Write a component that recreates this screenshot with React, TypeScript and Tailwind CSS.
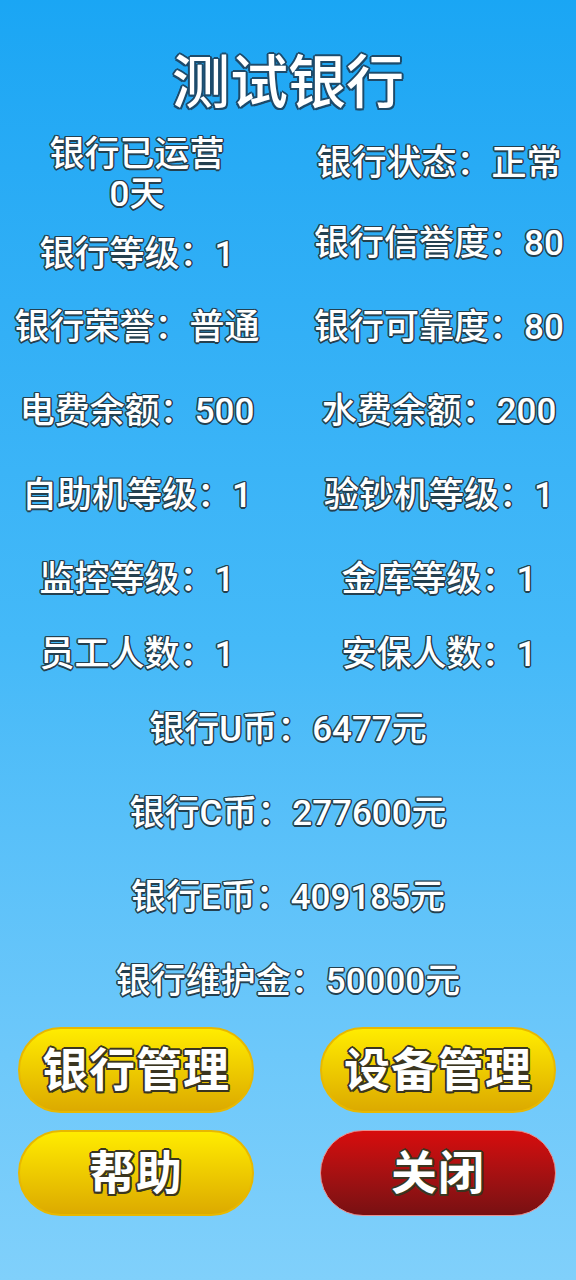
const FONT = "font-['Roboto','Noto_Sans_CJK_SC',sans-serif]";
const OUTLINE =
  "[text-shadow:1.5px_0_0_#24404f,-1.5px_0_0_#24404f,0_1.5px_0_#24404f,0_-1.5px_0_#24404f,1px_1px_0_#24404f,-1px_-1px_0_#24404f,1px_-1px_0_#24404f,-1px_1px_0_#24404f]";
const BTN_OUTLINE =
  "[text-shadow:2px_0_0_#3a3520,-2px_0_0_#3a3520,0_2px_0_#3a3520,0_-2px_0_#3a3520,1.5px_1.5px_0_#3a3520,-1.5px_-1.5px_0_#3a3520,1.5px_-1.5px_0_#3a3520,-1.5px_1.5px_0_#3a3520]";

function Stat({ children, className = "" }: { children: React.ReactNode; className?: string }) {
  return (
    <div className={`text-center text-[35px] leading-[40px] font-medium text-white whitespace-nowrap ${OUTLINE} ${className}`}>
      {children}
    </div>
  );
}

function Pair({ left, right }: { left: string; right: string }) {
  return (
    <div className="grid grid-cols-2 gap-x-7 h-[84px] items-center">
      <Stat>{left}</Stat>
      <Stat>{right}</Stat>
    </div>
  );
}

function Money({ children }: { children: React.ReactNode }) {
  return (
    <div className="h-[84px] flex items-center justify-center">
      <Stat>{children}</Stat>
    </div>
  );
}

function Button({ label, red = false }: { label: string; red?: boolean }) {
  return (
    <button
      className={`w-[236px] h-[86px] rounded-full flex items-center justify-center text-[46px] font-bold text-white tracking-[1px] ${BTN_OUTLINE} ${
        red
          ? "bg-gradient-to-b from-[#d80c0c] to-[#781012] border border-[#e89090]"
          : "bg-gradient-to-b from-[#ffec00] to-[#dcaa00] border-2 border-[#e8b800]"
      }`}
    >
      {label}
    </button>
  );
}

export default function App() {
  return (
    <div className={`w-[576px] h-[1280px] overflow-hidden bg-gradient-to-b from-[#1aa6f4] via-[#44b9f8] to-[#80d0fb] ${FONT}`}>
      {/* Title */}
      <div className="pt-[53px] text-center">
        <h1 className="text-[58px] leading-[60px] font-medium text-white [text-shadow:2px_0_0_#1d4b6b,-2px_0_0_#1d4b6b,0_2px_0_#1d4b6b,0_-2px_0_#1d4b6b,1.5px_1.5px_0_#1d4b6b,-1.5px_-1.5px_0_#1d4b6b,1.5px_-1.5px_0_#1d4b6b,-1.5px_1.5px_0_#1d4b6b]">
          测试银行
        </h1>
      </div>

      {/* Top rows */}
      <div className="mt-[22px] grid grid-cols-2 gap-x-7 h-[80px] items-start">
        <Stat>
          银行已运营
          <br />
          0天
        </Stat>
        <Stat className="mt-[9px]">银行状态：正常</Stat>
      </div>
      <div className="grid grid-cols-2 gap-x-7 h-[71px] items-start">
        <Stat className="mt-[20px]">银行等级：1</Stat>
        <Stat className="mt-[9px]">银行信誉度：80</Stat>
      </div>

      <Pair left="银行荣誉：普通" right="银行可靠度：80" />
      <Pair left="电费余额：500" right="水费余额：200" />
      <Pair left="自助机等级：1" right="验钞机等级：1" />
      <Pair left="监控等级：1" right="金库等级：1" />
      <div className="grid grid-cols-2 gap-x-7 h-[66px] items-center">
        <Stat>员工人数：1</Stat>
        <Stat>安保人数：1</Stat>
      </div>

      <Money>银行U币：6477元</Money>
      <Money>银行C币：277600元</Money>
      <Money>银行E币：409185元</Money>
      <Money>银行维护金：50000元</Money>

      {/* Buttons */}
      <div className="mt-[3px] pl-[18px] pr-[20px] flex flex-col gap-[17px]">
        <div className="flex justify-between">
          <Button label="银行管理" />
          <Button label="设备管理" />
        </div>
        <div className="flex justify-between">
          <Button label="帮助" />
          <Button label="关闭" red />
        </div>
      </div>
    </div>
  );
}
